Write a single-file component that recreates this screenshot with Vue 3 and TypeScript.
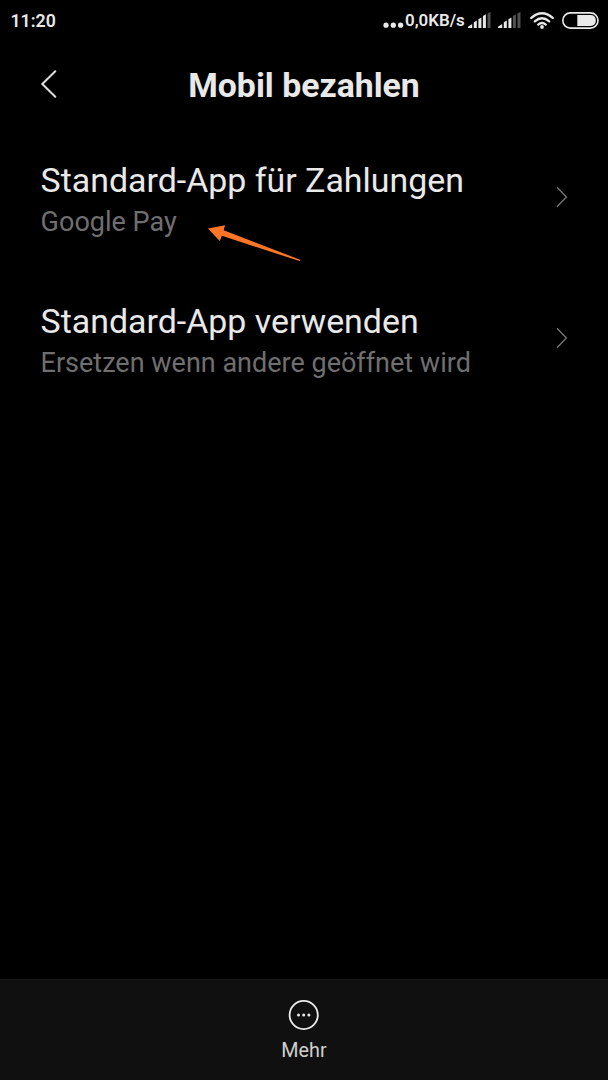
<script setup lang="ts">
interface Setting {
  title: string
  detail: string
}

const settings: Setting[] = [
  { title: 'Standard-App für Zahlungen', detail: 'Google Pay' },
  { title: 'Standard-App verwenden', detail: 'Ersetzen wenn andere geöffnet wird' },
]

// Number of lit bars (after the corner wedge) for each SIM
const signals: number[] = [3, 2]

const bars: string[] = [
  'M5.8 16 V10.2 L8.8 8.6 V16 Z',
  'M10.4 16 V7.2 L13.4 5.6 V16 Z',
  'M14.9 16 V3.9 L17.9 2.2 V16 Z',
  'M19.5 16 V1.2 L22.5 0 V16 Z',
]
</script>

<template>
  <div class="screen">
    <header class="status">
      <span class="clock">11:20</span>
      <div class="indicators">
        <svg class="dots" width="21" height="16" viewBox="0 0 21 16">
          <circle cx="3" cy="13.2" r="2.6" />
          <circle cx="10.3" cy="13.2" r="2.6" />
          <circle cx="17.6" cy="13.2" r="2.6" />
        </svg>
        <span class="speed">0,0KB/s</span>
        <svg v-for="(level, s) in signals" :key="s" class="signal" width="23" height="16" viewBox="0 0 23 16">
          <path d="M0 16 V14.8 L4.2 12 V16 Z" />
          <path v-for="(bar, i) in bars" :key="i" :class="{ off: i >= level }" :d="bar" />
        </svg>
        <svg class="wifi" width="24" height="17" viewBox="0 0 24 17">
          <path d="M1.3 5.9 Q12 -3.3 22.7 5.9" />
          <path d="M4.8 9.4 Q12 3.1 19.2 9.4" />
          <path d="M8.2 12.6 Q12 9.4 15.8 12.6" />
          <circle cx="12" cy="15" r="1.9" />
        </svg>
        <svg class="battery" width="37" height="17" viewBox="0 0 37 17">
          <rect class="case" x="0.8" y="0.9" width="35.2" height="15.2" rx="7.6" />
          <path class="charge" d="M15.3 3.1 H28.8 A5 5 0 0 1 33.8 8.1 V8.9 A5 5 0 0 1 28.8 13.9 H15.3 Z" />
        </svg>
      </div>
    </header>

    <div class="titlebar">
      <svg class="back" width="18" height="30" viewBox="0 0 18 30">
        <path d="M15.3 2.3 L2.3 15 L15.3 27.7" />
      </svg>
      <h1>Mobil bezahlen</h1>
    </div>

    <main>
      <div v-for="item in settings" :key="item.title" class="row">
        <div class="copy">
          <div class="name">{{ item.title }}</div>
          <div class="detail">{{ item.detail }}</div>
        </div>
        <svg class="chevron" width="12" height="22" viewBox="0 0 12 22">
          <path d="M1 1.2 L10.4 11 L1 20.8" />
        </svg>
      </div>
    </main>

    <svg class="pointer" width="96" height="40" viewBox="0 0 96 40">
      <path d="M2 3.5 L19 0.3 L17.7 5.2 L94 34.7 L94 36 L92 35.6 L15.9 10.8 L13.7 16 Z" />
    </svg>

    <footer class="toolbar">
      <svg width="32" height="32" viewBox="0 0 32 32">
        <circle class="ring" cx="15.7" cy="16" r="14.1" />
        <circle cx="10.5" cy="16" r="1.5" />
        <circle cx="15.7" cy="16" r="1.5" />
        <circle cx="20.9" cy="16" r="1.5" />
      </svg>
      <span>Mehr</span>
    </footer>
  </div>
</template>

<style>
body {
  background: #000;
}
</style>

<style scoped>
.screen {
  display: flex;
  position: relative;
  flex-direction: column;
  width: 608px;
  height: 1080px;
  overflow: hidden;
  background: #000;
  color: #e9e9e9;
  font-family: Roboto, sans-serif;
}

.status {
  display: flex;
  align-items: center;
  justify-content: space-between;
  box-sizing: border-box;
  height: 40px;
  padding: 0 9px 0 10.5px;
  font-weight: 600;
}

.clock {
  padding-top: 1px;
  font-size: 17.7px;
  line-height: 40px;
}

.indicators {
  display: flex;
  align-items: center;
}

.indicators svg {
  fill: #e9e9e9;
}

.speed {
  width: 60px;
  margin: 0 3px 0 1px;
  font-size: 16.9px;
  line-height: 40px;
  white-space: nowrap;
}

.signal {
  margin-right: 7px;
}

.indicators .off {
  fill: #505050;
}

.wifi {
  margin: 0 8px 0 2px;
}

.wifi path {
  fill: none;
  stroke: #e9e9e9;
  stroke-width: 2.3;
  stroke-linecap: round;
}

.battery .case {
  fill: none;
  stroke: #e9e9e9;
  stroke-width: 1.6;
}

.titlebar {
  display: grid;
  grid-template-columns: 40px 1fr 40px;
  align-items: center;
  height: 87px;
}

.back {
  justify-self: end;
  margin-right: -18px;
  fill: none;
  stroke: #dedede;
  stroke-width: 2;
  stroke-linecap: round;
}

h1 {
  margin: 5px 0 0;
  text-align: center;
  font-size: 33.8px;
  font-weight: 700;
  line-height: 40px;
}

main {
  flex: 1;
  margin-top: -1px;
}

.row {
  display: flex;
  align-items: center;
  justify-content: space-between;
  box-sizing: border-box;
  height: 141px;
  padding: 0 40px 0 40.6px;
}

.copy {
  padding-top: 6px;
  white-space: nowrap;
}

.name {
  font-size: 33.9px;
  line-height: 40px;
}

.detail {
  margin-top: 5px;
  color: #6f6f6f;
  font-size: 27px;
  line-height: 32px;
}

.chevron {
  fill: none;
  stroke: #737373;
  stroke-width: 1.4;
}

.pointer {
  position: absolute;
  left: 206px;
  top: 225px;
  fill: #ff7526;
}

.toolbar {
  display: flex;
  flex-direction: column;
  align-items: center;
  box-sizing: border-box;
  height: 101px;
  padding-top: 19px;
  border-top: 1px solid #161616;
  background: #101010;
  color: #cfcfcf;
  font-size: 19.8px;
  line-height: 24px;
}

.toolbar svg {
  margin-bottom: 8px;
  fill: #ececec;
}

.toolbar .ring {
  fill: none;
  stroke: #ececec;
  stroke-width: 1.8;
}
</style>
